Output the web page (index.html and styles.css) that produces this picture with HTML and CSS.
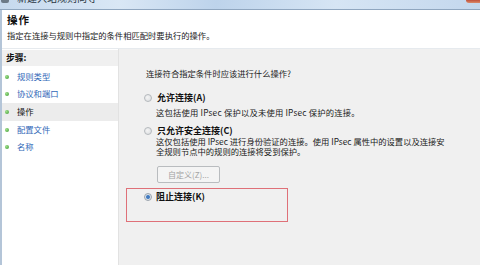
FILE: index.html
```html
<!DOCTYPE html>
<html lang="zh-CN">
<head>
<meta charset="utf-8">
<title>新建入站规则向导</title>
<link rel="stylesheet" href="styles.css">
</head>
<body>
<div class="titlebar">
  <span class="app-icon"></span>
  <span class="title-text">新建入站规则向导</span>
  <span class="close-btn"></span>
</div>
<div class="window">
  <div class="header">
    <div class="page-title">操作</div>
    <div class="page-desc">指定在连接与规则中指定的条件相匹配时要执行的操作。</div>
  </div>
  <div class="main">
    <div class="steps">
      <div class="steps-head">步骤:</div>
      <ul class="step-list">
        <li class="step"><span class="dot"></span>规则类型</li>
        <li class="step"><span class="dot"></span>协议和端口</li>
        <li class="step current"><span class="dot"></span>操作</li>
        <li class="step"><span class="dot"></span>配置文件</li>
        <li class="step"><span class="dot"></span>名称</li>
      </ul>
    </div>
    <div class="content">
      <div class="question">连接符合指定条件时应该进行什么操作?</div>
      <div class="option opt-allow"><span class="radio"></span><span class="opt-label">允许连接(A)</span></div>
      <div class="desc desc-allow">这包括使用 IPsec 保护以及未使用 IPsec 保护的连接。</div>
      <div class="option opt-secure"><span class="radio"></span><span class="opt-label">只允许安全连接(C)</span></div>
      <div class="desc desc-secure">这仅包括使用 IPsec 进行身份验证的连接。使用 IPsec 属性中的设置以及连接安<br>全规则节点中的规则的连接将受到保护。</div>
      <div class="btn-row"><span class="btn">自定义(Z)...</span></div>
      <div class="highlight">
        <div class="option opt-block"><span class="radio checked"></span><span class="opt-label">阻止连接(K)</span></div>
      </div>
    </div>
  </div>
</div>
</body>
</html>
```
FILE: styles.css
```css
html, body {
  margin: 0;
  padding: 0;
}
body {
  width: 480px;
  height: 265px;
  overflow: hidden;
  font-family: "Noto Sans CJK SC", "Noto Sans", sans-serif;
  font-size: 8.3px;
  color: #1a1a1a;
  background: #f0f0f0;
}
.titlebar {
  height: 9px;
  border-bottom: 1px solid #8fa6bf;
  background: linear-gradient(90deg, #c6d9ee 0%, #d9e7f5 25%, #bdd3eb 45%, #d6e5f4 70%, #c3d7ed 100%);
  display: flex;
  align-items: flex-start;
  overflow: hidden;
}
.app-icon {
  width: 8px;
  height: 3px;
  margin-left: 1px;
  background: #6c7a88;
  border-radius: 0 0 2px 2px;
}
.title-text {
  font-size: 10px;
  line-height: 10px;
  margin-top: -7px;
  margin-left: 8px;
  color: #2a3642;
}
.close-btn {
  margin-left: auto;
  margin-right: 0;
  width: 14px;
  height: 3px;
  background: linear-gradient(180deg, #c0503a, #d98a6a);
  border-radius: 0 0 0 3px;
}
.window {
  border-left: 2px solid #b4c5d8;
  height: 255px;
  display: flex;
  flex-direction: column;
}
.header {
  background: #ffffff;
  padding: 3px 0 7px 5px;
  border-bottom: 1px solid #e6eaee;
  height: 28px;
}
.page-title {
  font-size: 10.5px;
  line-height: 13px;
  font-weight: bold;
  letter-spacing: 1px;
  color: #111;
}
.page-desc {
  margin-top: 3px;
  line-height: 12px;
  color: #1a1a1a;
  white-space: nowrap;
}
.main {
  flex: 1;
  display: flex;
}
.steps {
  width: 116px;
  background: #ffffff;
  border-right: 1px solid #e2e2e2;
}
.steps-head {
  margin-top: 1px;
  height: 16px;
  line-height: 16px;
  padding-left: 4px;
  font-weight: bold;
  font-size: 8.8px;
  background: #f0f0f0;
  color: #111;
}
.step-list {
  list-style: none;
  margin: 1.7px 0 0 0;
  padding: 0;
}
.step {
  height: 17.7px;
  line-height: 17.7px;
  display: flex;
  align-items: center;
  color: #3168b8;
  white-space: nowrap;
}
.step.current {
  background: #ececec;
  color: #111;
}
.dot {
  width: 4px;
  height: 4px;
  border-radius: 50%;
  background: radial-gradient(circle at 35% 35%, #9ee08a, #3e9a32);
  margin-left: 3px;
  margin-right: 8px;
}
.content {
  flex: 1;
  padding: 18px 0 0 25px;
  background: #f0f0f0;
}
.question {
  line-height: 12px;
  padding-left: 2px;
  white-space: nowrap;
}
.option {
  display: flex;
  align-items: center;
  height: 12px;
  line-height: 12px;
}
.opt-allow {
  margin-top: 13px;
}
.opt-secure {
  margin-top: 8px;
}
.radio {
  width: 6px;
  height: 6px;
  border-radius: 50%;
  border: 1px solid #b5b9bd;
  background: radial-gradient(circle at 40% 40%, #f4f4f4, #d9dcdf);
  margin-right: 5px;
  flex: none;
}
.radio.checked {
  background: radial-gradient(circle, #3d6fb0 0, #4f86c8 1.6px, #dce3ea 2.4px, #e6e9ec 100%);
  border-color: #9aa3ad;
}
.opt-label {
  font-weight: bold;
  font-size: 9px;
  color: #111;
  white-space: nowrap;
}
.desc {
  margin-left: 12px;
  white-space: nowrap;
}
.desc-allow {
  margin-top: 3px;
  line-height: 10px;
  letter-spacing: 0.2px;
}
.desc-secure {
  line-height: 9.5px;
}
.btn-row {
  margin-top: 10px;
  padding-left: 13px;
  display: flex;
}
.btn {
  width: 61px;
  height: 15px;
  line-height: 15px;
  border: 1px solid #b9bcbf;
  border-radius: 2px;
  background: #f4f4f4;
  color: #a3a3a3;
  text-align: center;
  font-size: 8px;
}
.highlight {
  margin-top: 5px;
  margin-left: -18px;
  border: 1px solid #df7078;
  padding: 1.5px 0 0 0;
  box-sizing: border-box;
  height: 34px;
  width: 162px;
}
.opt-block {
  padding-left: 17px;
}
.opt-block .radio {
  margin-right: 4px;
}
```
